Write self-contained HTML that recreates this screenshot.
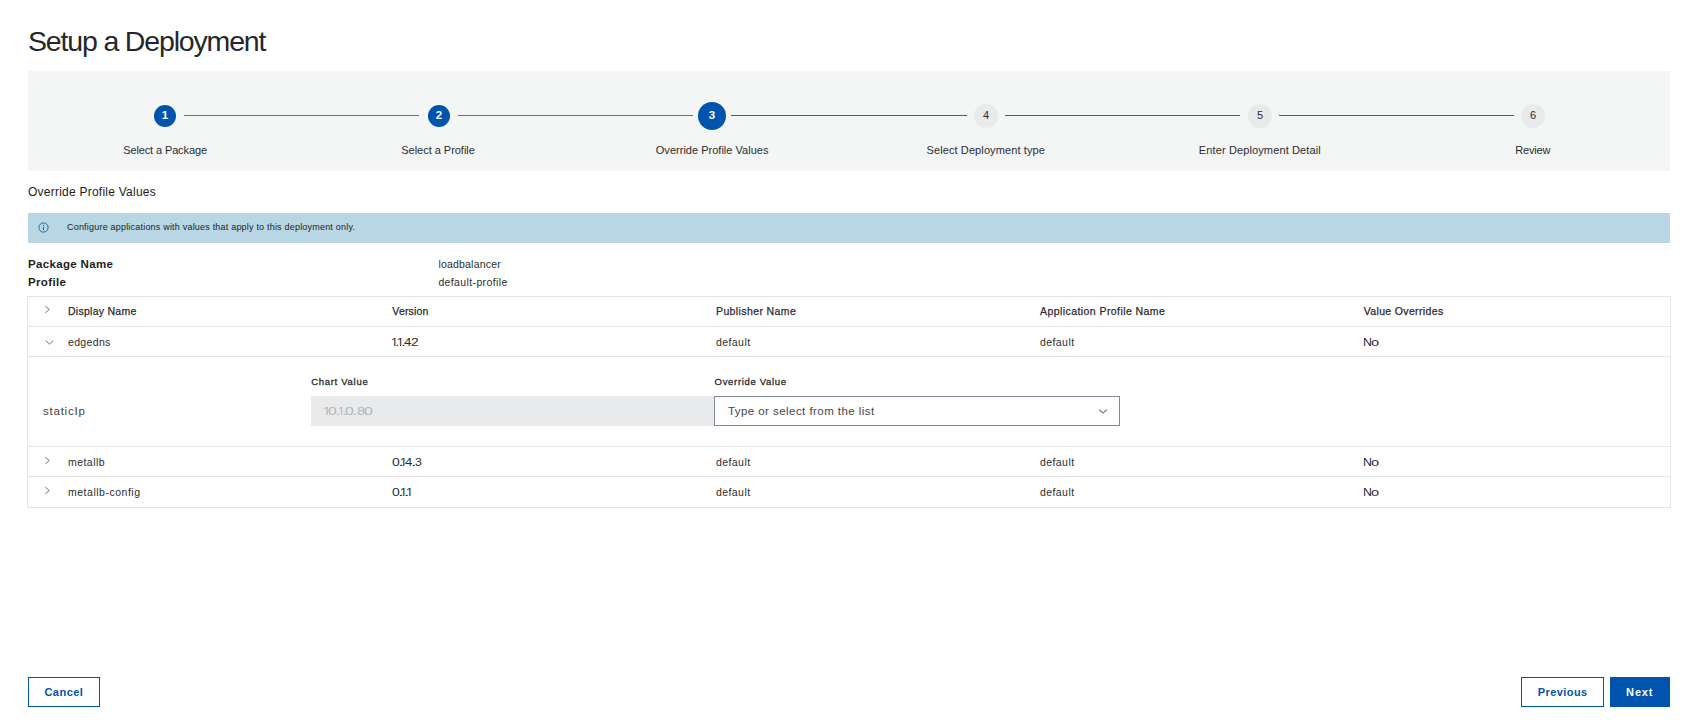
<!DOCTYPE html>
<html lang="en">
<head>
<meta charset="utf-8">
<title>Setup a Deployment</title>
<style>
*{box-sizing:border-box;margin:0;padding:0}
html,body{width:1684px;height:723px;background:#fff;overflow:hidden}
body{font-family:"Liberation Sans",sans-serif;color:#2b2c30;position:relative}
.abs{position:absolute;white-space:nowrap}
.stepper{position:absolute;left:28px;top:71px;width:1642px;height:100px;background:#f4f5f5}
.circle{position:absolute;border-radius:50%;text-align:center;font-size:11.5px;font-weight:700}
.c-done{width:22px;height:22px;top:34px;background:#0054ae;color:#fff;line-height:20px}
.c-act{width:28px;height:28px;top:31px;background:#0054ae;color:#fff;line-height:26px}
.c-todo{width:24px;height:24px;top:33px;background:#e9eaeb;color:#2b2c30;line-height:22px;font-weight:400;font-size:11px}
.line{position:absolute;top:44px;height:1px}
.l-blue{background:#3d7cc4}
.l-grey{background:#5a5b60}
.slabel{color:#2b2c30}
.sub{color:#1d1e22}
.banner{position:absolute;left:28px;top:213px;width:1642px;height:30px;background:#b9d6e5}
.btxt{color:#1d1e22}
.kv{font-weight:700;color:#1d1e22}
.vv{color:#2b2c30}
.table{position:absolute;left:27px;top:296px;width:1644px;height:212px;border:1px solid #e5e5e7}
.hr{position:absolute;left:0;width:1642px;height:1px;background:#e5e5e7}
.th{font-weight:400;color:#2b2c30;-webkit-text-stroke:0.25px #2b2c30}
.td{color:#2b2c30}
.lbl{font-weight:400;color:#2b2c30;-webkit-text-stroke:0.3px #2b2c30}
.btn{position:absolute;top:677px;height:30px;border:1px solid #0054ae;background:#fff;padding:0;margin:0;font-family:inherit;border-radius:0;cursor:pointer;display:block}
.btn.primary{background:#0054ae}
.bt{font-weight:700;color:#0054ae}
.bt.w{color:#fff}
svg{position:absolute;overflow:visible}
.g{position:absolute;top:0;transform-origin:0 0}
</style>
</head>
<body>
<h1 class="abs " id="title" style="left:28.00px;top:24.00px;font-size:28.5px;line-height:34px;letter-spacing:-1.165px;color:#26272b;font-weight:400">Setup a Deployment</h1>
<div class="stepper">
<div class="line l-blue" style="left:156px;width:235px"></div>
<div class="line l-blue" style="left:430px;width:235px"></div>
<div class="line l-grey" style="left:703px;width:236px"></div>
<div class="line l-grey" style="left:977px;width:235px"></div>
<div class="line l-grey" style="left:1251px;width:235px"></div>
<div class="circle c-done" style="left:126px">1</div>
<div class="circle c-done" style="left:400px">2</div>
<div class="circle c-act" style="left:670px">3</div>
<div class="circle c-todo" style="left:946px">4</div>
<div class="circle c-todo" style="left:1220px">5</div>
<div class="circle c-todo" style="left:1493px">6</div>
</div>
<div class="abs slabel" id="s1" style="left:123.20px;top:143.00px;font-size:11px;line-height:14px;letter-spacing:-0.120px;">Select a Package</div>
<div class="abs slabel" id="s2" style="left:401.30px;top:143.00px;font-size:11px;line-height:14px;letter-spacing:-0.030px;">Select a Profile</div>
<div class="abs slabel" id="s3" style="left:655.80px;top:143.00px;font-size:11px;line-height:14px;letter-spacing:0.016px;">Override Profile Values</div>
<div class="abs slabel" id="s4" style="left:926.50px;top:143.00px;font-size:11px;line-height:14px;letter-spacing:0.103px;">Select Deployment type</div>
<div class="abs slabel" id="s5" style="left:1198.80px;top:143.00px;font-size:11px;line-height:14px;letter-spacing:0.123px;">Enter Deployment Detail</div>
<div class="abs slabel" id="s6" style="left:1515.30px;top:143.00px;font-size:11px;line-height:14px;letter-spacing:-0.180px;">Review</div>
<div class="abs sub" id="sub" style="left:28.00px;top:184.00px;font-size:12px;line-height:16px;letter-spacing:0.237px;">Override Profile Values</div>
<div class="banner">
  <svg width="11" height="11" viewBox="0 0 11 11" style="left:10px;top:8.7px">
    <circle cx="5.5" cy="5.5" r="4.6" fill="none" stroke="#0054ae" stroke-width="0.85"/>
    <rect x="5.05" y="4.7" width="0.9" height="3.3" fill="#0054ae"/>
    <rect x="5.05" y="2.9" width="0.9" height="1" fill="#0054ae"/>
  </svg>
</div>
<div class="abs btxt" id="btxt" style="left:67.00px;top:221.00px;font-size:9px;line-height:12px;letter-spacing:0.202px;">Configure applications with values that apply to this deployment only.</div>
<div class="abs kv" id="k1" style="left:28.00px;top:257.00px;font-size:11.5px;line-height:14px;letter-spacing:0.344px;">Package Name</div>
<div class="abs kv" id="k2" style="left:28.00px;top:275.00px;font-size:11.5px;line-height:14px;letter-spacing:0.360px;">Profile</div>
<div class="abs vv" id="v1" style="left:438.40px;top:257.00px;font-size:10.5px;line-height:14px;letter-spacing:0.196px;">loadbalancer</div>
<div class="abs vv" id="v2" style="left:438.40px;top:275.00px;font-size:10.5px;line-height:14px;letter-spacing:0.373px;">default-profile</div>
<div class="table">
<div class="hr" style="top:29px"></div>
<div class="hr" style="top:59px"></div>
<div class="hr" style="top:149px"></div>
<div class="hr" style="top:179px"></div>
<svg width="6" height="9" viewBox="0 0 6 9" style="left:17.0px;top:8.2px"><path d="M0.35 1.1 L4.3 4.5 L0.35 7.9" fill="none" stroke="#6a6d75" stroke-width="0.95"/></svg>
<div class="abs th" id="h1" style="left:40.00px;top:7.00px;font-size:10.5px;line-height:14px;letter-spacing:0.262px;">Display Name</div>
<div class="abs th" id="h2" style="left:364.30px;top:7.00px;font-size:10.5px;line-height:14px;letter-spacing:0.180px;">Version</div>
<div class="abs th" id="h3" style="left:688.00px;top:7.00px;font-size:10.5px;line-height:14px;letter-spacing:0.388px;">Publisher Name</div>
<div class="abs th" id="h4" style="left:1012.00px;top:7.00px;font-size:10.5px;line-height:14px;letter-spacing:0.430px;">Application Profile Name</div>
<div class="abs th" id="h5" style="left:1335.70px;top:7.00px;font-size:10.5px;line-height:14px;letter-spacing:0.354px;">Value Overrides</div>
<div class="abs td" id="r1a" style="left:40.00px;top:38.00px;font-size:10.5px;line-height:14px;letter-spacing:0.345px;">edgedns</div>
<div class="abs td" id="r1c" style="left:688.00px;top:38.00px;font-size:10.5px;line-height:14px;letter-spacing:0.420px;">default</div>
<div class="abs td" id="r1d" style="left:1012.00px;top:38.00px;font-size:10.5px;line-height:14px;letter-spacing:0.420px;">default</div>
<div class="abs" id="r1e" style="left:0;top:38.00px;font-size:11px;line-height:14px;color:#2b2c30"><span class="g" style="left:1334.94px;transform:scaleX(1.123)">N</span><span class="g" style="left:1342.94px;transform:scaleX(1.328)">o</span></div>
<div class="abs td" id="r2a" style="left:40.00px;top:158.00px;font-size:10.5px;line-height:14px;letter-spacing:0.450px;">metallb</div>
<div class="abs td" id="r2c" style="left:688.00px;top:158.00px;font-size:10.5px;line-height:14px;letter-spacing:0.420px;">default</div>
<div class="abs td" id="r2d" style="left:1012.00px;top:158.00px;font-size:10.5px;line-height:14px;letter-spacing:0.420px;">default</div>
<div class="abs" id="r2e" style="left:0;top:158.00px;font-size:11px;line-height:14px;color:#2b2c30"><span class="g" style="left:1334.94px;transform:scaleX(1.123)">N</span><span class="g" style="left:1342.94px;transform:scaleX(1.328)">o</span></div>
<div class="abs td" id="r3a" style="left:40.00px;top:188.00px;font-size:10.5px;line-height:14px;letter-spacing:0.512px;">metallb-config</div>
<div class="abs td" id="r3c" style="left:688.00px;top:188.00px;font-size:10.5px;line-height:14px;letter-spacing:0.420px;">default</div>
<div class="abs td" id="r3d" style="left:1012.00px;top:188.00px;font-size:10.5px;line-height:14px;letter-spacing:0.420px;">default</div>
<div class="abs" id="r3e" style="left:0;top:188.00px;font-size:11px;line-height:14px;color:#2b2c30"><span class="g" style="left:1334.94px;transform:scaleX(1.123)">N</span><span class="g" style="left:1342.94px;transform:scaleX(1.328)">o</span></div>
<svg width="9" height="6" viewBox="0 0 9 6" style="left:16.9px;top:43.2px"><path d="M0.65 0.65 L4.45 4.13 L8.25 0.65" fill="none" stroke="#6a6d75" stroke-width="0.95"/></svg>
<svg width="6" height="9" viewBox="0 0 6 9" style="left:17.0px;top:159.2px"><path d="M0.35 1.1 L4.3 4.5 L0.35 7.9" fill="none" stroke="#6a6d75" stroke-width="0.95"/></svg>
<svg width="6" height="9" viewBox="0 0 6 9" style="left:17.0px;top:189.2px"><path d="M0.35 1.1 L4.3 4.5 L0.35 7.9" fill="none" stroke="#6a6d75" stroke-width="0.95"/></svg>
<div class="abs lbl" id="l1" style="left:283.20px;top:78.00px;font-size:9.5px;line-height:13px;letter-spacing:0.702px;">Chart Value</div>
<div class="abs lbl" id="l2" style="left:686.60px;top:78.00px;font-size:9.5px;line-height:13px;letter-spacing:0.678px;">Override Value</div>
<div class="abs " id="sip" style="left:15.00px;top:107.00px;font-size:11.5px;line-height:14px;letter-spacing:0.771px;color:#3f4046">staticIp</div>
<div class="abs" style="left:283px;top:99px;width:403px;height:30px;background:#e9eaec"></div>
<div class="abs" id="ip" style="left:0;top:107.00px;font-size:11.5px;line-height:14px;color:#b3b5bb"><span class="g" style="left:294.50px;transform:scaleX(1.178);clip-path:polygon(0 0,100% 0,100% 9.99px,3.93px 9.99px,3.93px 100%,2.87px 100%,2.87px 9.99px,0 9.99px)">1</span><span class="g" style="left:300.14px;transform:scaleX(1.355)">0</span><span class="g" style="left:307.48px;transform:scaleX(1.690)">.</span><span class="g" style="left:310.06px;transform:scaleX(1.035);clip-path:polygon(0 0,100% 0,100% 9.99px,3.93px 9.99px,3.93px 100%,2.87px 100%,2.87px 9.99px,0 9.99px)">1</span><span class="g" style="left:313.83px;transform:scaleX(1.735)">.</span><span class="g" style="left:317.34px;transform:scaleX(1.364)">0</span><span class="g" style="left:324.43px;transform:scaleX(1.735)">.</span><span class="g" style="left:328.51px;transform:scaleX(1.279)">8</span><span class="g" style="left:336.24px;transform:scaleX(1.364)">0</span></div>
<div class="abs" id="r1b" style="left:0;top:38.00px;font-size:11.5px;line-height:14px;color:#2b2c30"><span class="g" style="left:362.58px;transform:scaleX(1.106);clip-path:polygon(0 0,100% 0,100% 9.99px,3.93px 9.99px,3.93px 100%,2.87px 100%,2.87px 9.99px,0 9.99px)">1</span><span class="g" style="left:366.91px;transform:scaleX(1.324)">.</span><span class="g" style="left:368.66px;transform:scaleX(1.035);clip-path:polygon(0 0,100% 0,100% 9.99px,3.93px 9.99px,3.93px 100%,2.87px 100%,2.87px 9.99px,0 9.99px)">1</span><span class="g" style="left:372.62px;transform:scaleX(1.461)">.</span><span class="g" style="left:375.90px;transform:scaleX(1.148)">4</span><span class="g" style="left:382.56px;transform:scaleX(1.193)">2</span></div>
<div class="abs" id="r2b" style="left:0;top:158.00px;font-size:11.5px;line-height:14px;color:#2b2c30"><span class="g" style="left:363.61px;transform:scaleX(1.210)">0</span><span class="g" style="left:369.58px;transform:scaleX(1.827)">.</span><span class="g" style="left:371.73px;transform:scaleX(1.106);clip-path:polygon(0 0,100% 0,100% 9.99px,3.93px 9.99px,3.93px 100%,2.87px 100%,2.87px 9.99px,0 9.99px)">1</span><span class="g" style="left:376.75px;transform:scaleX(1.139)">4</span><span class="g" style="left:382.53px;transform:scaleX(1.690)">.</span><span class="g" style="left:386.53px;transform:scaleX(1.073)">3</span></div>
<div class="abs" id="r3b" style="left:0;top:188.00px;font-size:11.5px;line-height:14px;color:#2b2c30"><span class="g" style="left:363.61px;transform:scaleX(1.210)">0</span><span class="g" style="left:369.58px;transform:scaleX(1.827)">.</span><span class="g" style="left:371.73px;transform:scaleX(1.106);clip-path:polygon(0 0,100% 0,100% 9.99px,3.93px 9.99px,3.93px 100%,2.87px 100%,2.87px 9.99px,0 9.99px)">1</span><span class="g" style="left:375.68px;transform:scaleX(1.690)">.</span><span class="g" style="left:377.71px;transform:scaleX(1.124);clip-path:polygon(0 0,100% 0,100% 9.99px,3.93px 9.99px,3.93px 100%,2.87px 100%,2.87px 9.99px,0 9.99px)">1</span></div>
<div class="abs" style="left:686px;top:99px;width:406px;height:30px;background:#fff;border:1px solid #858996"></div>
<div class="abs " id="ph" style="left:699.90px;top:107.00px;font-size:11.5px;line-height:14px;letter-spacing:0.447px;color:#45464c">Type or select from the list</div>
<svg width="9" height="6" viewBox="0 0 9 6" style="left:1071.00px;top:111.95px"><path d="M0.45 0.75 L4.05 4.15 L7.65 0.75" fill="none" stroke="#6c6f78" stroke-width="1.05"/></svg>
</div>
<button type="button" class="btn" style="left:28px;width:72px"><span class="abs bt" id="b1" style="left:15.40px;top:7.00px;font-size:11px;line-height:14px;letter-spacing:0.486px;">Cancel</span></button>
<button type="button" class="btn" style="left:1521px;width:83px"><span class="abs bt" id="b2" style="left:15.80px;top:7.00px;font-size:11px;line-height:14px;letter-spacing:0.424px;">Previous</span></button>
<button type="button" class="btn primary" style="left:1610px;width:60px"><span class="abs bt w" id="b3" style="left:15.10px;top:7.00px;font-size:11px;line-height:14px;letter-spacing:0.840px;">Next</span></button>
</body>
</html>
